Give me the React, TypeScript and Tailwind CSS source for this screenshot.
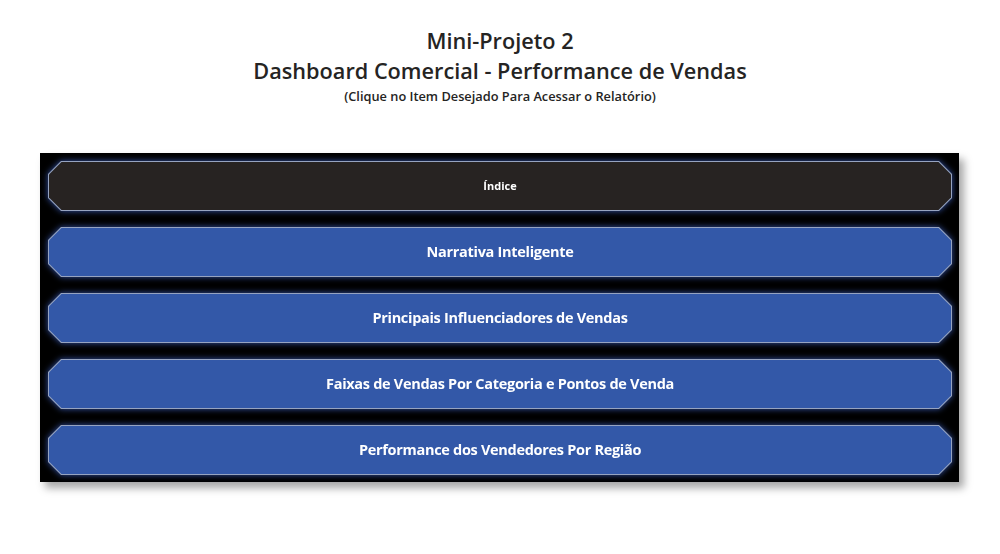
import React from "react";

function Btn({ label, dark }: { label: string; dark?: boolean }) {
  return (
    <div className="[filter:drop-shadow(0_0_3px_rgba(70,110,220,0.75))]">
      <div className="h-[50px] bg-[#96a3c0] p-px [clip-path:polygon(13px_0,calc(100%-13px)_0,100%_13px,100%_calc(100%-13px),calc(100%-13px)_100%,13px_100%,0_calc(100%-13px),0_13px)]">
        <div
          className={
            "flex h-full items-center justify-center [clip-path:polygon(12.5px_0,calc(100%-12.5px)_0,100%_12.5px,100%_calc(100%-12.5px),calc(100%-12.5px)_100%,12.5px_100%,0_calc(100%-12.5px),0_12.5px)] " +
            (dark ? "bg-[#272322]" : "bg-[#3358a8]")
          }
        >
          <span
            className={
              "font-bold text-white " +
              (dark ? "text-[11px]" : "text-[14.5px] tracking-[-0.3px]")
            }
          >
            {label}
          </span>
        </div>
      </div>
    </div>
  );
}

export default function App() {
  return (
    <div className="h-[554px] w-[1000px] bg-white font-['Open_Sans','Noto_Sans',sans-serif]">
      <div className="flex flex-col items-center pt-[26px] text-[#252423]">
        <div className="text-[21.7px] font-semibold leading-[30px]">Mini-Projeto 2</div>
        <div className="text-[21.7px] font-semibold leading-[30px]">
          Dashboard Comercial - Performance de Vendas
        </div>
        <div className="mt-[2px] text-[12.8px] font-semibold leading-[17px]">
          (Clique no Item Desejado Para Acessar o Relatório)
        </div>
      </div>
      <div className="ml-[40px] mt-[48px] w-[919px] bg-black pl-[8px] pr-[7px] pt-[8px] pb-[7px] shadow-[5px_6px_8px_rgba(0,0,0,0.35)]">
        <div className="flex flex-col gap-[16px]">
          <Btn label="Índice" dark />
          <Btn label="Narrativa Inteligente" />
          <Btn label="Principais Influenciadores de Vendas" />
          <Btn label="Faixas de Vendas Por Categoria e Pontos de Venda" />
          <Btn label="Performance dos Vendedores Por Região" />
        </div>
      </div>
    </div>
  );
}
